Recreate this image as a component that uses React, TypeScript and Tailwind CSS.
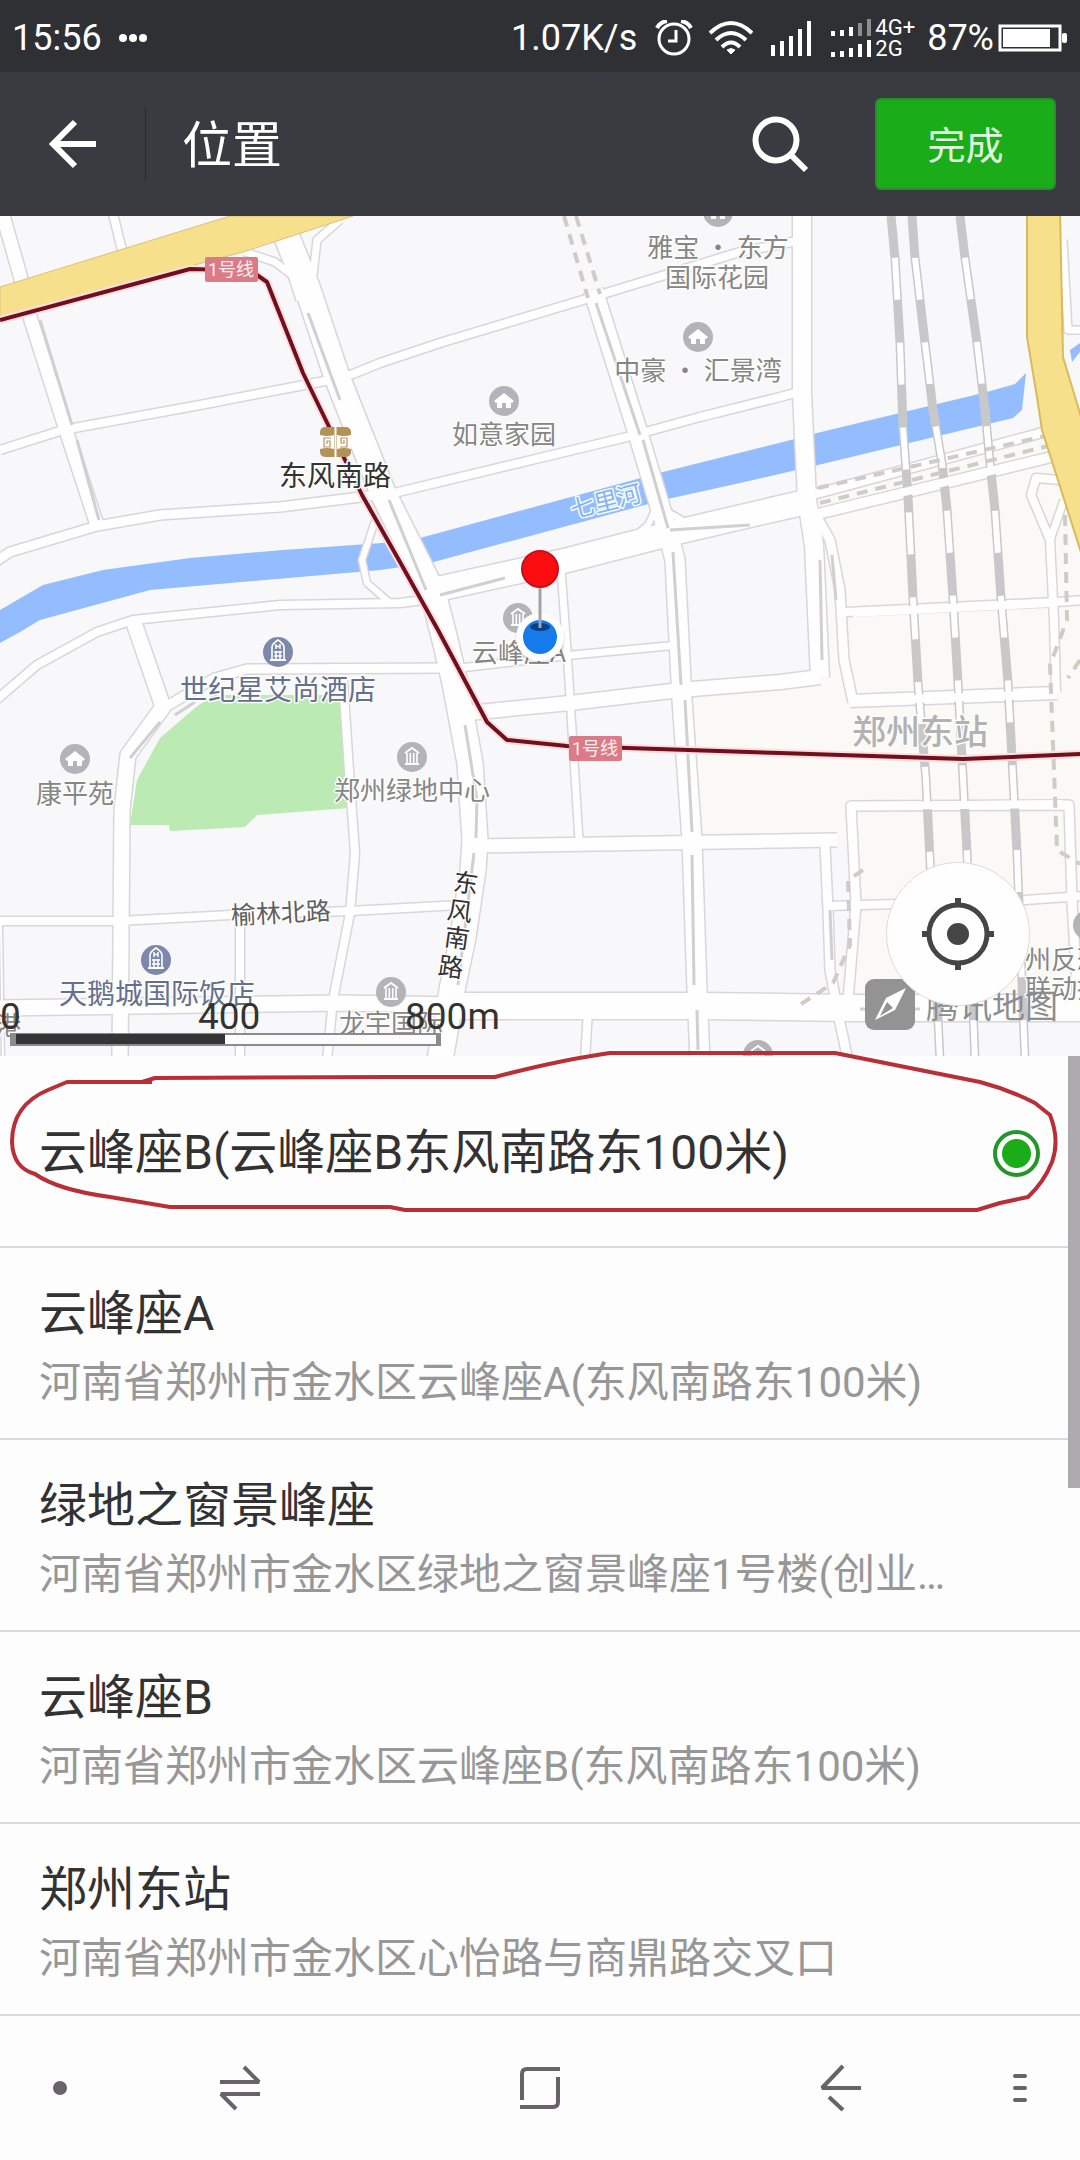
import React from 'react';

type Road = { d: string; w: number };

// Street centre lines with the width of the white surface
const ROADS: Road[] = [
  { d: 'M0 205L20 275L30 317L66 430L97 525', w: 13 },
  { d: 'M112 210L122 250', w: 8 },
  { d: 'M0 450L63 430L200 405L330 380L353 374L380 363L443 342L593 297L665 275L740 252L802 240', w: 8 },
  { d: 'M-5 562L10 552L97 526L160 515L280 507L385 494', w: 9 },
  { d: 'M282 225L307 287L337 377L383 493L433 593L445 640L455 683L470 763L475 840L473 870L463 937L452 990L440 1060', w: 25 },
  { d: 'M340 220L317 240L313 275', w: 7 },
  { d: 'M245 252L275 262L292 275L300 300', w: 7 },
  { d: 'M377 515L362 560L367 583L390 603', w: 6 },
  { d: 'M-5 701L37 665L97 632L133 620L280 605L400 603L440 598', w: 8 },
  { d: 'M433 590L560 562L673 533L780 508L815 500', w: 24 },
  { d: 'M630 540L648 525L660 500', w: 6 },
  { d: 'M668 512L685 522L702 526', w: 6 },
  { d: 'M815 494L1037 434L1080 420', w: 9 },
  { d: 'M818 514L1047 458L1080 450', w: 10 },
  { d: 'M390 494L627 437L700 417L780 397L802 391', w: 8 },
  { d: 'M593 290L637 430L667 530L675 560L682 700L692 840L697 990L700 1060', w: 19 },
  { d: 'M802 210L802 393L807 500L814 545L820 678', w: 18 },
  { d: 'M813 510L830 540L840 590L844 660L853 702', w: 9 },
  { d: 'M468 713L570 703L680 690L780 682L820 677', w: 14 },
  { d: 'M845 612L1057 602L1085 600', w: 8 },
  { d: 'M850 701L1057 693', w: 12 },
  { d: 'M1060 480L1036 478L1031 495L1050 540L1054 620L1056 692', w: 8 },
  { d: 'M1064 500L1050 540', w: 7 },
  { d: 'M475 846L837 840', w: 13 },
  { d: 'M0 1008L340 1003L460 1005', w: 15 },
  { d: 'M440 1006L700 1006L850 1008L1085 1008', w: 26 },
  { d: 'M133 620L163 707L128 755L122 810L120 1060', w: 15 },
  { d: 'M160 710L215 678L247 669L450 668', w: 9 },
  { d: 'M460 668L573 655L678 645', w: 7 },
  { d: 'M561 570L567 650L573 745L579 840', w: 7 },
  { d: 'M0 921L120 921L230 915L350 911L460 905', w: 8 },
  { d: 'M343 680L349 770L355 853L350 913L333 1000L327 1060', w: 8 },
  { d: 'M240 918L240 1060', w: 8 },
  { d: 'M1 925L3 1060', w: 2 },
  { d: 'M588 1010L585 1060', w: 8 },
  { d: 'M825 845L828 910L830 970L840 1023L848 1060', w: 9 },
  { d: 'M1078 1010L1072 900L1069 805L851 806L856 905L848 1000', w: 9 },
  { d: 'M830 906L1025 900L1085 896', w: 8 },
  { d: 'M1063 240L1068 330L1085 330', w: 7 },
];

// Lane dividers drawn on top of the wide streets
const MEDIANS = [
  'M308 313L340 400', 'M389 500L426 590', 'M596 303L640 435', 'M643 440L668 528', 'M673 552L681 685',
  'M685 700L692 832', 'M692 855L694 985', 'M697 1010L698 1050', 'M465 725L477 800L476 838', 'M474 853L458 985',
  'M440 595L505 578', 'M670 530L750 525', 'M820 560L822 660', 'M832 555L836 600', 'M40 320L72 425', 'M77 440L99 520',
  'M130 758L160 722', 'M175 715L195 702', 'M830 910L832 960', 'M860 1009L920 1009',
];

const RAILS = [
  'M891 216L895 258L900 343L903 427L908 497L913 598L918 683L926 780L930 860L940 1060',
  'M912 216L915 258L925 343L933 410L942 463L947 510L953 598L958 683L967 853L975 1060',
  'M960 216L965 258L977 343L985 410L990 463L995 510L1001 598L1008 683L1017 853L1025 1060',
];

const DASHES = [
  'M564 216L588 298', 'M576 216L600 294', 'M818 488L1080 428', 'M820 503L1080 438',
  'M1065 515L1067 620L1050 665L1057 850L1080 864',
  'M863 870L848 880L850 945L833 983L795 1008', 'M1080 660L1068 678',
];

type PinKind = 'house' | 'office' | 'hotel';

const PINS: { x: number; y: number; kind: PinKind }[] = [
  { x: 718, y: 212, kind: 'house' },
  { x: 698, y: 337, kind: 'house' },
  { x: 504, y: 401, kind: 'house' },
  { x: 75, y: 759, kind: 'house' },
  { x: 518, y: 618, kind: 'office' },
  { x: 412, y: 757, kind: 'office' },
  { x: 391, y: 992, kind: 'office' },
  { x: 758, y: 1055, kind: 'office' },
  { x: 1088, y: 925, kind: 'office' },
  { x: 278, y: 652, kind: 'hotel' },
  { x: 156, y: 960, kind: 'hotel' },
];

const LABELS = [
  { x: 718, y: 257, text: '雅宝 · 东方', cls: 'text-[26px] fill-[#868686]' },
  { x: 717, y: 287, text: '国际花园', cls: 'text-[26px] fill-[#868686]' },
  { x: 698, y: 380, text: '中豪 · 汇景湾', cls: 'text-[26px] fill-[#868686]' },
  { x: 504, y: 444, text: '如意家园', cls: 'text-[26px] fill-[#868686]' },
  { x: 75, y: 803, text: '康平苑', cls: 'text-[26px] fill-[#868686]' },
  { x: 412, y: 800, text: '郑州绿地中心', cls: 'text-[26px] fill-[#868686]' },
  { x: 391, y: 1033, text: '龙宇国际', cls: 'text-[26px] fill-[#868686]' },
  { x: 519, y: 662, text: '云峰座A', cls: 'text-[26px] fill-[#868686]' },
  { x: 8, y: 1035, text: '港', cls: 'text-[26px] fill-[#868686]' },
  { x: 1064, y: 969, text: '州反恐', cls: 'text-[26px] fill-[#868686]' },
  { x: 1064, y: 998, text: '联动指', cls: 'text-[26px] fill-[#868686]' },
  { x: 278, y: 700, text: '世纪星艾尚酒店', cls: 'text-[28px] fill-[#65708f]' },
  { x: 157, y: 1004, text: '天鹅城国际饭店', cls: 'text-[28px] fill-[#65708f]' },
  { x: 335, y: 486, text: '东风南路', cls: 'text-[28px] fill-[#333333]' },
  { x: 920, y: 744, text: '郑州东站', cls: 'text-[34px] font-medium fill-[#b3b2b2]' },
];

const STREET_NAME = [
  { x: 466, y: 883, char: '东' },
  { x: 460, y: 911, char: '风' },
  { x: 457, y: 938, char: '南' },
  { x: 451, y: 967, char: '路' },
];

const PLACES = [
  { title: '云峰座A', address: '河南省郑州市金水区云峰座A(东风南路东100米)' },
  { title: '绿地之窗景峰座', address: '河南省郑州市金水区绿地之窗景峰座1号楼(创业…' },
  { title: '云峰座B', address: '河南省郑州市金水区云峰座B(东风南路东100米)' },
  { title: '郑州东站', address: '河南省郑州市金水区心怡路与商鼎路交叉口' },
];

const PinGlyph: React.FC<{ kind: PinKind }> = ({ kind }) => {
  if (kind === 'house') {
    return <path d="M0 -8L10 0L8 2L7 1.500V7H2V2H-2V7H-7V1.500L-8 2L-10 0Z" fill="#fff" />;
  }
  if (kind === 'office') {
    return (
      <g stroke="#fff" fill="none">
        <path d="M-7 -4L0 -9L7 -4" strokeWidth="2" />
        <path d="M-5 -4V6M-1.700 -4V6M1.700 -4V6M5 -4V6" strokeWidth="1.600" />
        <path d="M-7 7H7" strokeWidth="2" />
      </g>
    );
  }
  return (
    <g stroke="#fff" fill="none" strokeWidth="1.600">
      <path d="M-6 7V-5Q-6 -8 0 -12Q6 -8 6 -5V7" />
      <path d="M-8 8H8" strokeWidth="2" />
      <path d="M-2 -8V-3M2 -8V-3M-2 -5.500H2" strokeWidth="1.500" />
      <path d="M-4 0H4M-4 4H4M-2 -1V7M2 -1V7" strokeWidth="1.500" />
    </g>
  );
};

const MetroBadge: React.FC<{ x: number; y: number }> = ({ x, y }) => (
  <g>
    <rect x={x} y={y} width="53" height="25" rx="2" fill="#da7b87" />
    <text x={x + 26} y={y + 19} textAnchor="middle" className="text-[18px] fill-[#fdeef0]">1号线</text>
  </g>
);

const CityMap: React.FC = () => (
  <svg viewBox="0 216 1080 840" className="block w-full" role="img" aria-label="地图">
    <rect x="0" y="216" width="1080" height="840" fill="#f8f7f9" />
    <path d="M820 500L1080 430V1000H850V840H690V700L820 685Z" fill="#faf9f5" />
    <path d="M213 695H340L349 808L257 815L245 827L170 831L169 825H130L137 780L160 738L195 708Z" fill="#bbeab3" />
    <path
      d="M0 610L43 585L103 570L190 558L283 550L382 543L420 538L663 472L795 439L817 433L987 392L1015 384L1026 373L1022 410L1013 418L818 465L740 483L663 500L430 563L380 570L150 590L40 620L20 632L0 643Z"
      fill="#93bdfe"
    />
    <path d="M1080 343L1070 350L1072 362L1080 352Z" fill="#93bdfe" />

    <g fill="none" strokeLinejoin="round">
      {ROADS.map(({ d, w }) => <path key={d} d={d} stroke="#d8d6d9" strokeWidth={w + 3} />)}
      {ROADS.map(({ d, w }) => <path key={d} d={d} stroke="#fefefe" strokeWidth={w} />)}
      {MEDIANS.map((d) => <path key={d} d={d} stroke="#d0cfd1" strokeWidth="3" />)}
    </g>

    <g fill="none">
      {RAILS.map((d) => (
        <g key={d}>
          <path d={d} stroke="#c9c8c9" strokeWidth="9" />
          <path d={d} stroke="#fff" strokeWidth="6" strokeDasharray="42 43" strokeDashoffset="-42" />
        </g>
      ))}
      <path d="M853 613L1050 603M853 701L1050 694M858 806L1062 804M822 512L1040 459" stroke="#fefefe" strokeWidth="8" />
      {DASHES.map((d) => <path key={d} d={d} stroke="#cfccc5" strokeWidth="4" strokeDasharray="11 8" />)}
    </g>

    <path d="M0 287L230 216H353L243 252L0 317Z" fill="#f7e08b" stroke="#d9c27a" strokeWidth="1" />
    <path d="M1027 210V337L1037 397L1042 430L1085 565V430L1063 357L1060 210Z" fill="#f7e08b" stroke="#d9bb5c" strokeWidth="2" />

    <g fill="none" strokeLinejoin="round">
      {['#fbdfe2', '#720f1c'].map((color, i) => (
        <path
          key={color}
          d="M0 320L190 269L230 270L257 275L267 282L303 373L333 435L362 495L400 562L438 630L487 722L507 740L567 746L780 753L963 759L1080 754"
          stroke={color}
          strokeWidth={i === 0 ? 8 : 4}
        />
      ))}
    </g>
    <MetroBadge x={205} y={257} />
    <MetroBadge x={569} y={736} />

    {PINS.map(({ x, y, kind }) => (
      <g key={`${x}-${y}`} transform={`translate(${x} ${y})`}>
        <circle r="15" fill={kind === 'hotel' ? '#7c88ac' : '#b3b3b8'} />
        <PinGlyph kind={kind} />
      </g>
    ))}

    {/* Metro station sign */}
    <rect x="320" y="427" width="31" height="30" rx="5" fill="#b39257" />
    <path d="M320 435Q327 437 334 435V449Q327 447 320 449ZM351 435Q344 437 337 435V449Q344 447 351 449Z" fill="#fff" />
    <path d="M335.500 427V457" stroke="#fff" strokeWidth="2" />
    <path d="M331 438H324V447H330V441H327V444M340 447H347V438H341V443H344V440" fill="none" stroke="#b8935a" strokeWidth="1.200" />

    <g
      textAnchor="middle"
      stroke="#fdfdfb"
      strokeWidth="3"
      strokeLinejoin="round"
      className="font-['Noto_Sans_CJK_SC',sans-serif] [paint-order:stroke]"
    >
      {LABELS.map(({ x, y, text, cls }) => (
        <text key={`${x}-${y}`} x={x} y={y} className={cls}>{text}</text>
      ))}
      <text x="281" y="922" transform="rotate(-3 281 915)" className="text-[25px] fill-[#5f5f5f]">榆林北路</text>
      {STREET_NAME.map(({ x, y, char }) => (
        <text key={char} x={x} y={y + 9} transform={`rotate(8 ${x} ${y})`} className="text-[25px] fill-[#333333]">{char}</text>
      ))}
      <text x="606" y="510" transform="rotate(-14 606 502)" className="text-[24px] fill-[#86b3ee] stroke-[#f4faff]">七里河</text>
    </g>

    {/* Current position and the dropped pin */}
    <circle cx="540" cy="639" r="25" fill="#000" opacity="0.08" />
    <circle cx="540" cy="637" r="24" fill="#fff" />
    <circle cx="540" cy="637" r="17" fill="#167bea" />
    <ellipse cx="540" cy="627" rx="10" ry="4" fill="#0a3f86" />
    <path d="M540 586V628" stroke="#a3a3a6" strokeWidth="3" />
    <circle cx="540" cy="569" r="18" fill="#fb0d10" stroke="#c4121b" strokeWidth="2" />

    {/* Map provider mark */}
    <rect x="865" y="979" width="50" height="51" rx="9" fill="#939393" />
    <path d="M906 988L895 1010L875 1020L886 998Z" fill="#fff" />
    <path d="M887 1002L893 1008L880 1016Z" fill="#939393" />
    <text x="926" y="1018" className="text-[33px] fill-[#8d8d8d]">腾讯地图</text>

    {/* Distance scale */}
    <rect x="10" y="1033" width="431" height="13" fill="#8b8b8b" />
    <rect x="16" y="1034" width="209" height="10" fill="#353535" />
    <rect x="225" y="1035" width="211" height="9" fill="#fcfcfc" />
    <g className="text-[37px] fill-[#333333]">
      <text x="0" y="1029">0</text>
      <text x="198" y="1029">400</text>
      <text x="405" y="1029">800m</text>
    </g>
  </svg>
);

const SignalBars: React.FC<{ faded?: number; dotted?: boolean }> = ({ faded = 0, dotted = false }) => {
  const heights = dotted ? [5, 6, 9, 13, 17] : [11, 15, 20, 27, 35];
  const total = dotted ? 17 : 35;
  return (
    <svg width="40" height={total} viewBox={`0 0 40 ${total}`}>
      {heights.map((h, i) => (
        <rect key={i} x={i * 9} y={total - h} width="4" height={h} fill="#fff" opacity={i >= 5 - faded ? 0.45 : 1} />
      ))}
    </svg>
  );
};

const StatusBar: React.FC = () => (
  <div className="flex h-[72px] items-center bg-[#2f3034] px-3 pt-1 text-[36px] leading-[42px] text-white">
    <span>15:56</span>
    <svg width="30" height="10" viewBox="0 0 30 10" className="ml-4" fill="#fff">
      <circle cx="5" cy="5" r="4" />
      <circle cx="15" cy="5" r="4" />
      <circle cx="25" cy="5" r="4" />
    </svg>
    <span className="ml-auto">1.07K/s</span>
    <svg width="38" height="36" viewBox="0 0 38 36" className="ml-[18px]" fill="none" stroke="#fff" strokeWidth="3">
      <circle cx="19" cy="19" r="15" />
      <path d="M21 10V21H13" />
      <path d="M2 8Q5 2 12 1M36 8Q33 2 26 1" strokeWidth="4" />
    </svg>
    <svg width="44" height="36" viewBox="0 0 44 36" className="ml-4" fill="none" stroke="#fff" strokeWidth="4">
      <path d="M1 13Q22 -7 43 13" />
      <path d="M7 20Q22 6 37 20" />
      <path d="M13 27Q22 18 31 27" />
      <path d="M18 30Q22 27 26 30L22 34Z" fill="#fff" strokeWidth="1" />
    </svg>
    <span className="ml-[18px]"><SignalBars /></span>
    <div className="ml-5 flex flex-col gap-1">
      <SignalBars dotted faded={2} />
      <SignalBars dotted />
    </div>
    <div className="ml-1 flex flex-col text-[22px] leading-[21px]">
      <span>4G+</span>
      <span>2G</span>
    </div>
    <span className="ml-3">87%</span>
    <svg width="70" height="28" viewBox="0 0 70 28" className="ml-1">
      <rect x="2" y="2" width="60" height="24" fill="none" stroke="#fff" strokeWidth="3" />
      <rect x="5" y="5" width="47" height="18" fill="#fff" />
      <rect x="64" y="9" width="5" height="10" rx="2" fill="#fff" />
    </svg>
  </div>
);

const Header: React.FC = () => (
  <header className="flex h-36 items-center bg-[#3a3a41] pr-6 text-white">
    <button type="button" aria-label="返回" className="flex h-full w-[145px] items-center justify-center">
      <svg width="50" height="50" viewBox="0 0 50 50" fill="none" stroke="#fff" strokeWidth="6">
        <path d="M48 25H5M27 3L5 25L27 47" />
      </svg>
    </button>
    <div className="h-[74px] w-px bg-[#2a2a30]" />
    <h1 className="ml-9 pt-1 text-[50px] leading-[60px]">位置</h1>
    <button type="button" aria-label="搜索" className="mr-[66px] ml-auto">
      <svg width="58" height="58" viewBox="0 0 58 58" fill="none" stroke="#fff">
        <circle cx="25" cy="25" r="20.500" strokeWidth="6" />
        <path d="M39 39L55 55" strokeWidth="6" />
      </svg>
    </button>
    <button type="button" className="h-[92px] w-[181px] rounded-md border-2 border-[#248f2b] bg-[#1aad19] pt-1 text-[38px] leading-[46px] text-[#e2f7e1]">
      完成
    </button>
  </header>
);

const NavBar: React.FC = () => (
  <nav className="grid h-36 grid-cols-[1fr_2fr_3fr_2fr_1fr] place-items-center bg-[#fdfdfd]">
    <button type="button" aria-label="状态">
      <span className="block size-[14px] rounded-full bg-[#666467]" />
    </button>
    <button type="button" aria-label="切换">
      <svg width="44" height="46" viewBox="0 0 44 46" fill="none" stroke="#666467" strokeWidth="4">
        <path d="M2 17H41L26 2" strokeLinejoin="bevel" />
        <path d="M42 29H3L18 44" strokeLinejoin="bevel" />
      </svg>
    </button>
    <button type="button" aria-label="主页">
      <svg width="44" height="44" viewBox="0 0 44 44" fill="none" stroke="#666467" strokeWidth="4">
        <path d="M4 34V8Q4 3 9 3H42" />
        <path d="M2 41H35Q40 41 40 36V11" />
      </svg>
    </button>
    <button type="button" aria-label="后退">
      <svg width="44" height="48" viewBox="0 0 44 48" fill="none" stroke="#666467" strokeWidth="4">
        <path d="M43 24H4L25 2" strokeLinejoin="bevel" />
        <path d="M11 33L25 46" />
      </svg>
    </button>
    <button type="button" aria-label="菜单" className="flex flex-col gap-2">
      <span className="h-1 w-[14px] rounded-sm bg-[#666467]" />
      <span className="h-1 w-[14px] rounded-sm bg-[#666467]" />
      <span className="h-1 w-[14px] rounded-sm bg-[#666467]" />
    </button>
  </nav>
);

export default function App() {
  return (
    <div className="w-full overflow-hidden bg-[#fdfdfd] font-['Roboto','Noto_Sans_CJK_SC',sans-serif]">
      <StatusBar />
      <Header />

      <div className="relative">
        <CityMap />
        <button
          type="button"
          aria-label="定位"
          className="absolute right-[50px] bottom-[50px] flex size-36 items-center justify-center rounded-full border border-[#dcdcdc] bg-[#fefefe]"
        >
          <svg width="74" height="74" viewBox="0 0 74 74" fill="none" stroke="#464545">
            <circle cx="37" cy="37" r="29" strokeWidth="5" />
            <path d="M37 1V10M37 64V73M1 37H10M64 37H73" strokeWidth="6" />
            <circle cx="37" cy="37" r="11" fill="#464545" stroke="none" />
          </svg>
        </button>
      </div>

      <main className="relative">
        <label className="relative flex h-48 items-center border-b-2 border-[#d9d8da] pt-1 pr-10 pl-[39px]">
          <span className="grow text-[48px] leading-[60px] text-[#333233]">云峰座B(云峰座B东风南路东100米)</span>
          <input
            type="radio"
            name="place"
            defaultChecked
            className="size-[47px] shrink-0 appearance-none rounded-full border-4 border-[#23962a] bg-white bg-[radial-gradient(circle,#1aad19_14px,#ffffff_15px)]"
          />
          {/* Hand-drawn ring round the chosen place */}
          <svg
            viewBox="0 1040 1080 190"
            preserveAspectRatio="none"
            className="pointer-events-none absolute -top-4 left-0 h-[190px] w-full"
            fill="none"
            stroke="#b92f38"
            strokeWidth="4"
            strokeLinejoin="round"
          >
            <path d="M152 1082H67L48 1090Q12 1105 12 1142Q13 1168 35 1174Q58 1190 110 1197L170 1207H390L405 1210H977L1000 1203L1028 1197Q1044 1182 1052 1162Q1060 1140 1050 1115L1035 1103Q1010 1090 980 1082Q920 1070 835 1053H610Q560 1060 495 1077H390L155 1078L142 1082" />
          </svg>
        </label>
        <ul>
          {PLACES.map(({ title, address }) => (
            <li key={title} className="flex h-48 flex-col gap-3 border-b-2 border-[#d9d8da] px-[39px] pt-9">
              <span className="text-[48px] leading-[60px] text-[#333233]">{title}</span>
              <span className="truncate text-[42px] leading-[54px] text-[#989798]">{address}</span>
            </li>
          ))}
        </ul>
        <div className="absolute top-0 right-0 h-[432px] w-3 bg-[#adabae]" />
      </main>

      <NavBar />
    </div>
  );
}
